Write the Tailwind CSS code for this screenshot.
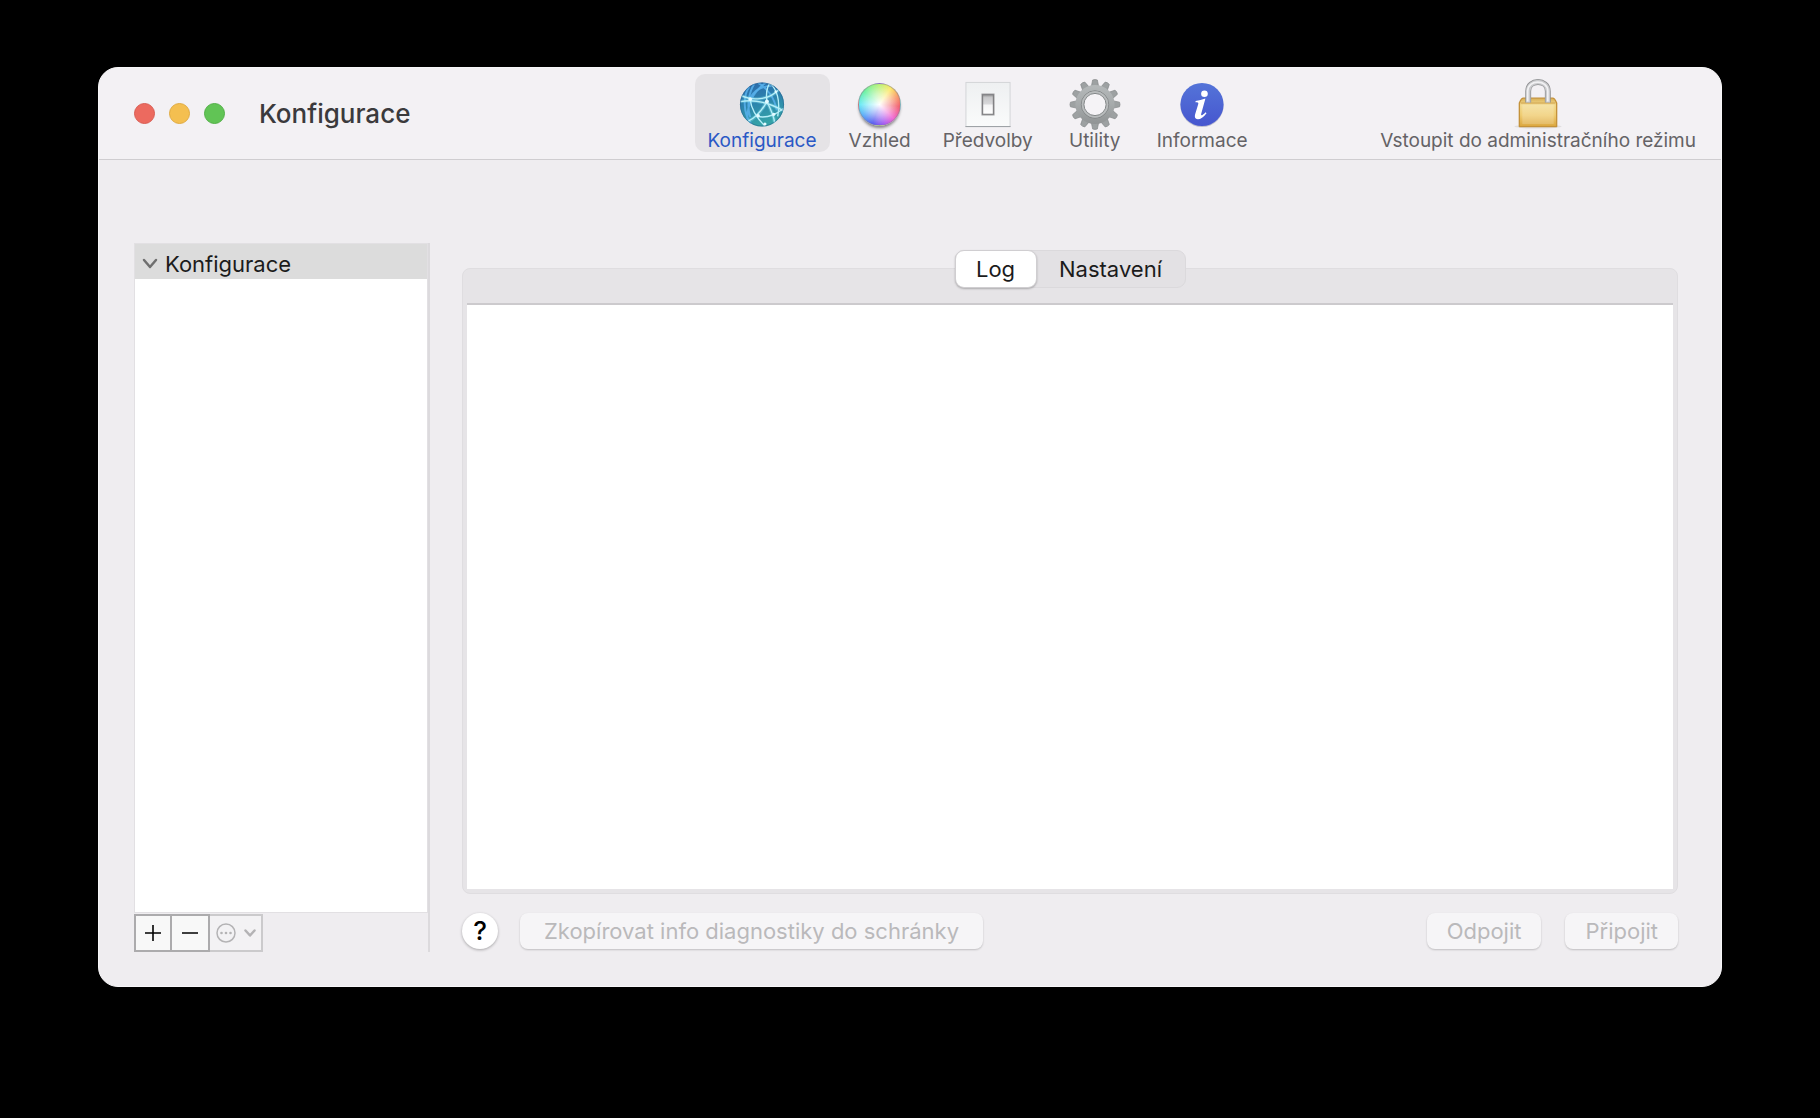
<!DOCTYPE html>
<html lang="cs">
<head>
  <meta charset="UTF-8" />
  <meta name="viewport" content="width=device-width, initial-scale=1" />
  <title>Konfigurace</title>
  <script src="https://cdn.jsdelivr.net/npm/@tailwindcss/browser@4"></script>
</head>
<body class="bg-black min-h-screen flex flex-col px-[98px] pt-[67px] pb-[131px] font-['Inter','Roboto',sans-serif]">

  <!-- Window -->
  <div class="grow flex flex-col rounded-[20px] overflow-hidden bg-[#efedf0] border border-[#f8f7f9]">

    <!-- Toolbar -->
    <header class="flex items-start h-[92px] pl-[35px] pr-3 bg-[#f3f1f4] border-b border-[#cfcdd0]">
      <div class="flex items-center self-center gap-3.5">
        <button type="button" aria-label="Zavřít" class="size-[21px] rounded-full bg-[#ec6a5f] border border-[#d95d53]"></button>
        <button type="button" aria-label="Minimalizovat" class="size-[21px] rounded-full bg-[#f4bf50] border border-[#e0ab42]"></button>
        <button type="button" aria-label="Zvětšit" class="size-[21px] rounded-full bg-[#61c455] border border-[#52b047]"></button>
      </div>
      <h1 class="self-center ml-[34px] text-[26px] leading-8 font-medium text-[#3b3a3c]">Konfigurace</h1>

      <div class="grow-8"></div>

      <nav class="flex gap-1.5 pt-1.5 text-[19px] leading-[22px] text-[#656366]">
        <button type="button" class="flex flex-col items-center h-[78px] px-[13px] pt-[5px] rounded-[10px] bg-[#e5e3e6] text-[#2a58c5]">
          <svg class="w-15 h-[52px]" viewBox="0 0 56 52" fill="none">
            <defs>
              <linearGradient id="globe" x1="0" y1="0" x2="0.3" y2="1">
                <stop offset="0" stop-color="#2b66ab" />
                <stop offset="0.5" stop-color="#2c82ad" />
                <stop offset="1" stop-color="#35a3a8" />
              </linearGradient>
              <clipPath id="globeClip"><circle cx="28" cy="26" r="22.5" /></clipPath>
            </defs>
            <circle cx="28" cy="26" r="22.5" fill="url(#globe)" />
            <g clip-path="url(#globeClip)">
              <g stroke="#58b2ec" stroke-opacity="0.85" stroke-width="2">
                <path d="M15 8C9 16 8 34 17 46M20 5c-5 8-8 22-4 34M33 3c-12 8-20 20-20 38" />
                <path d="M24 4c9 5 17 15 19 28M16 19c5-8 12-12 22-12" />
              </g>
              <g stroke="#7fe0ee" stroke-opacity="0.35" stroke-width="3.5">
                <path d="M7 17c10 5 28 5 38-6M6 23c12-2 28 0 45 10M33 23c-5 9-10 16-19 20M33 23c4 8 7 14 8 22" />
              </g>
              <g stroke="#b5eef8" stroke-width="1.4">
                <path d="M7 17c10 5 28 5 38-6M6 23c12-2 28 0 45 10" />
                <path d="M16 21c1 10 6 18 15 27M33 23c-5 9-10 16-19 20M33 23c4 8 7 14 8 22M23 38c8 2 18-1 27-8" />
                <path d="M36 4c-4 6-4 12-3 19M36 4c7 6 11 18 8 34" />
              </g>
            </g>
            <g fill="#e4fbff">
              <circle cx="16" cy="20.5" r="1.9" /><circle cx="33" cy="23" r="2" /><circle cx="24" cy="37.5" r="1.8" />
              <circle cx="40" cy="36" r="1.6" /><circle cx="31" cy="46" r="1.6" /><circle cx="42" cy="13" r="1.3" />
            </g>
            <circle cx="28" cy="26" r="22" stroke="#285d8b" stroke-opacity="0.5" />
          </svg>
          Konfigurace
        </button>

        <button type="button" class="flex flex-col items-center h-[78px] px-[13px] pt-[5px] rounded-[10px]">
          <span class="flex items-center justify-center w-15 h-[52px]">
            <span class="size-[43px] rounded-full border border-[#8f8c95]/60 shadow-[0_3px_3px_-1px_rgba(0,0,0,0.45)] bg-[radial-gradient(circle,#fff_0%,rgba(255,255,255,0.5)_40%,rgba(255,255,255,0)_75%),conic-gradient(#b4f06a,#fbe65a_35deg,#f8935a_65deg,#f0525f_95deg,#ef58cf_135deg,#a14cf0_165deg,#4a50ee_200deg,#4aa0f8_235deg,#5ce8f4_270deg,#5cf09c_310deg,#b4f06a)]"></span>
          </span>
          Vzhled
        </button>

        <button type="button" class="flex flex-col items-center h-[78px] px-[13px] pt-[5px] rounded-[10px]">
          <svg class="w-15 h-[52px]" viewBox="0 0 56 52">
            <defs>
              <linearGradient id="plate" x1="0" y1="0" x2="0" y2="1">
                <stop offset="0" stop-color="#eef0f1" /><stop offset="1" stop-color="#fafbfb" />
              </linearGradient>
              <linearGradient id="rocker" x1="0" y1="0" x2="0" y2="1">
                <stop offset="0" stop-color="#98989a" /><stop offset="0.15" stop-color="#c8c8ca" />
                <stop offset="0.48" stop-color="#d9d9db" /><stop offset="0.52" stop-color="#f4f4f5" />
                <stop offset="1" stop-color="#fff" />
              </linearGradient>
            </defs>
            <rect x="5.5" y="3.5" width="45" height="45" fill="url(#plate)" stroke="#d3d5d8" />
            <path d="M5 48.5h46" stroke="#9a9ea2" />
            <rect x="21" y="14.5" width="14" height="23" rx="1" fill="#bdbdbf" />
            <rect x="22.500" y="16" width="11" height="20" fill="url(#rocker)" stroke="#808083" stroke-width="1.200" />
          </svg>
          Předvolby
        </button>

        <button type="button" class="flex flex-col items-center h-[78px] px-[13px] pt-[5px] rounded-[10px]">
          <svg class="w-15 h-[52px]" viewBox="0 0 56 52">
            <defs>
              <linearGradient id="gear" gradientUnits="userSpaceOnUse" x1="0" y1="-26" x2="0" y2="26">
                <stop offset="0" stop-color="#b9bdbe" /><stop offset="0.5" stop-color="#a6aaab" />
                <stop offset="1" stop-color="#8a8d8e" />
              </linearGradient>
              <path id="tooth" d="M-3.8-18L-2.4-25Q0-26 2.4-25L3.8-18Z" />
            </defs>
            <g transform="translate(28 26)">
              <g fill="#9da1a2" stroke="#85898a" stroke-width="0.7">
                <use href="#tooth" /><use href="#tooth" transform="rotate(30)" /><use href="#tooth" transform="rotate(60)" />
                <use href="#tooth" transform="rotate(90)" /><use href="#tooth" transform="rotate(120)" /><use href="#tooth" transform="rotate(150)" />
                <use href="#tooth" transform="rotate(180)" /><use href="#tooth" transform="rotate(210)" /><use href="#tooth" transform="rotate(240)" />
                <use href="#tooth" transform="rotate(270)" /><use href="#tooth" transform="rotate(300)" /><use href="#tooth" transform="rotate(330)" />
              </g>
              <circle r="15.5" fill="none" stroke="url(#gear)" stroke-width="9" />
              <circle r="14" fill="none" stroke="#7f8384" stroke-width="0.9" />
              <circle r="12.500" fill="none" stroke="#b9bcbd" stroke-width="2" />
              <circle r="11.3" fill="#f5f3f6" stroke="#838788" />
            </g>
          </svg>
          Utility
        </button>

        <button type="button" class="flex flex-col items-center h-[78px] px-[13px] pt-[5px] rounded-[10px]">
          <svg class="w-15 h-[52px]" viewBox="0 0 56 52">
            <defs>
              <linearGradient id="info" x1="0" y1="0" x2="0" y2="1">
                <stop offset="0" stop-color="#5474d8" /><stop offset="1" stop-color="#4656cf" />
              </linearGradient>
            </defs>
            <circle cx="28" cy="27" r="22" fill="#9a9cb4" fill-opacity="0.6" />
            <circle cx="28" cy="26" r="22" fill="url(#info)" />
            <circle cx="30.5" cy="15" r="3.4" fill="#fff" />
            <path d="M21.5 22.5C25 22 28 21 31.5 20L27.2 35.5C26.7 37.8 28 37.500 31.6 33.8L32.6 34.8C29.5 39 26.5 41 23.8 41C20.8 41 20.3 38.7 21 36L24.2 25.5C24.6 24 23.6 23.8 21.3 23.8Z" fill="#fff" />
          </svg>
          Informace
        </button>
      </nav>

      <div class="grow-3"></div>

      <button type="button" class="flex flex-col items-center h-[78px] mt-1.5 px-[13px] pt-[5px] rounded-[10px] text-[19px] leading-[22px] text-[#656366]">
        <svg class="w-15 h-[52px]" viewBox="0 0 56 52">
          <defs>
            <linearGradient id="brass" x1="0" y1="0" x2="0" y2="1">
              <stop offset="0" stop-color="#d9ae52" /><stop offset="0.25" stop-color="#f3dc92" />
              <stop offset="0.6" stop-color="#f0cd73" /><stop offset="1" stop-color="#dba63d" />
            </linearGradient>
          </defs>
          <ellipse cx="28" cy="48.5" rx="24" ry="2" fill="#000" fill-opacity="0.08" />
          <path d="M13 19.5h30q2 0 4 5v24H9v-24q2-5 4-5z" fill="url(#brass)" stroke="#c4923a" stroke-width="1.4" stroke-linejoin="round" />
          <path d="M10.5 24.5h35" stroke="#c4923a" stroke-opacity="0.7" />
          <rect x="12" y="26" width="32" height="20" fill="#fff" fill-opacity="0.18" />
          <path d="M18 24V12.5C18 0 38 0 38 12.5V24" fill="none" stroke="#8f9092" stroke-width="6" />
          <path d="M18 24V12.5C18 0 38 0 38 12.5V24" fill="none" stroke="#c9cacc" stroke-width="4.5" />
          <path d="M17.5 23V12.5C17.5 0 38 0 38 12.5V23" fill="none" stroke="#f1f1f3" stroke-width="1.8" />
        </svg>
        Vstoupit do administračního režimu
      </button>
    </header>

    <!-- Content -->
    <main class="grow flex pl-[35px] pr-[43px] pt-[83px] pb-[34px]">

      <!-- Sidebar -->
      <aside class="w-[296px] flex flex-col border-r-2 border-[#dcdadd]">
        <div class="grow flex flex-col mb-px border border-[#e2e0e3] bg-white">
          <button type="button" aria-expanded="true" class="flex items-center gap-[7px] h-[35px] pl-[7px] pt-1 bg-[#dcdcdc] text-[22px] leading-7 text-[#1b1b1b]">
            <svg class="w-4 h-3" viewBox="0 0 16 12" fill="none" stroke="#6f6f6f" stroke-width="2.5" stroke-linecap="round" stroke-linejoin="round"><path d="M2 2l6 7 6-7" /></svg>
            Konfigurace
          </button>
        </div>
        <div class="flex">
          <button type="button" aria-label="Přidat" class="flex items-center justify-center w-[38px] h-[38px] bg-[#f8f8f8] border-2 border-[#acabad]">
            <svg class="size-4" viewBox="0 0 16 16" stroke="#000" stroke-width="1.6"><path d="M0 8h16M8 0v16" /></svg>
          </button>
          <button type="button" aria-label="Odebrat" class="flex items-center justify-center w-[38px] h-[38px] bg-[#f8f8f8] border-2 border-l-0 border-[#acabad]">
            <svg class="size-4" viewBox="0 0 16 16" stroke="#000" stroke-width="1.6"><path d="M0 8h16" /></svg>
          </button>
          <button type="button" aria-label="Další akce" disabled class="flex items-center justify-center gap-2 w-[53px] h-[38px] bg-[#f3f2f4] border-2 border-l-0 border-[#cbcacc]">
            <svg class="size-5" viewBox="0 0 20 20" fill="#b4b3b5"><circle cx="10" cy="10" r="9" fill="none" stroke="#b4b3b5" stroke-width="1.5" /><circle cx="5.5" cy="10" r="1.3" /><circle cx="10" cy="10" r="1.3" /><circle cx="14.5" cy="10" r="1.3" /></svg>
            <svg class="w-3 h-2" viewBox="0 0 12 8" fill="none" stroke="#b4b3b5" stroke-width="2.5" stroke-linecap="round" stroke-linejoin="round"><path d="M1.5 1.5l4.5 5 4.5-5" /></svg>
          </button>
        </div>
      </aside>

      <!-- Detail -->
      <section class="grow flex flex-col ml-8 pt-[7px]">
        <div role="tablist" class="relative self-center flex h-[38px] -mb-5 rounded-[9px] bg-[#e3e1e4] border border-[#dbd9dc] text-[22px] leading-7 text-[#1b1b1b]">
          <button type="button" role="tab" aria-selected="true" class="w-[82px] -my-px -ml-px rounded-[9px] bg-white border border-[#d0ced1] shadow-[0_1px_2px_rgba(0,0,0,0.25)]">Log</button>
          <button type="button" role="tab" aria-selected="false" class="w-[148px]">Nastavení</button>
        </div>

        <div class="grow flex flex-col rounded-[8px] bg-[#e6e4e7] border border-[#dfdde0] pt-[34px] px-1 pb-1">
          <textarea aria-label="Log" readonly class="grow block w-full resize-none outline-none bg-white border-t-2 border-[#cccacd]"></textarea>
        </div>

        <div class="flex items-center mt-[19px] mb-[3px] text-[22px] leading-7">
          <button type="button" aria-label="Nápověda" class="size-9 rounded-full bg-white text-[26px] leading-9 font-medium text-black shadow-[0_1px_3px_rgba(0,0,0,0.3)]">?</button>
          <button type="button" disabled class="h-9 px-6 ml-[22px] rounded-[8px] bg-[#f6f5f7] text-[#bab9bb] shadow-[0_1px_2px_rgba(0,0,0,0.2)]">Zkopírovat info diagnostiky do schránky</button>
          <div class="grow"></div>
          <button type="button" disabled class="h-9 px-5 rounded-[8px] bg-[#f6f5f7] text-[#bab9bb] shadow-[0_1px_2px_rgba(0,0,0,0.2)]">Odpojit</button>
          <button type="button" disabled class="h-9 px-5 ml-6 rounded-[8px] bg-[#f6f5f7] text-[#bab9bb] shadow-[0_1px_2px_rgba(0,0,0,0.2)]">Připojit</button>
        </div>
      </section>
    </main>
  </div>

</body>
</html>
